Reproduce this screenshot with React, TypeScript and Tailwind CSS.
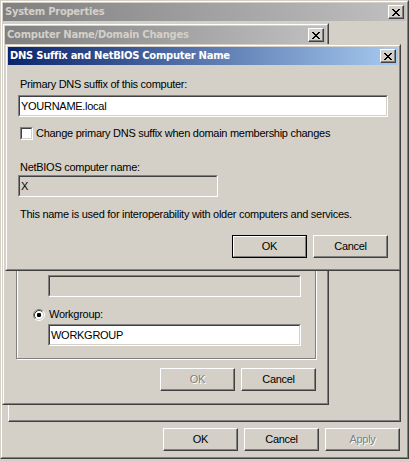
import type { ReactNode } from "react";

// classic 8x7 close glyph
const CloseGlyph = () => (
  <svg width="8" height="7" viewBox="0 0 8 7" shapeRendering="crispEdges">
    <path
      d="M0 0h2v1H0zM6 0h2v1H6zM1 1h2v1H1zM5 1h2v1H5zM2 2h4v1H2zM3 3h2v1H3zM2 4h4v1H2zM1 5h2v1H1zM5 5h2v1H5zM0 6h2v1H0zM6 6h2v1H6z"
      fill="#000"
    />
  </svg>
);

const TitleBar = ({ title, active }: { title: string; active?: boolean }) => (
  <div
    className={
      active
        ? "flex h-[18px] shrink-0 items-center bg-[linear-gradient(to_right,#0a246a,#a6caf0)] px-[2px] text-white"
        : "flex h-[18px] shrink-0 items-center bg-[linear-gradient(to_right,#808080,#c0c0c0)] px-[2px] text-[#d4d0c8]"
    }
  >
    <span className="font-['DejaVu_Sans',sans-serif] text-[10px] font-bold leading-none whitespace-nowrap">{title}</span>
    <div className="ml-auto flex h-[14px] w-[16px] items-center justify-center border border-t-white border-l-white border-r-[#404040] border-b-[#404040] bg-[#d4d0c8] pt-px shadow-[inset_-1px_-1px_0_#808080]">
      <CloseGlyph />
    </div>
  </div>
);

const Win = ({ pos, title, active, children }: { pos: string; title: string; active?: boolean; children: ReactNode }) => (
  <div className={`absolute ${pos} flex flex-col border border-t-[#d4d0c8] border-l-[#d4d0c8] border-r-[#404040] border-b-[#404040] bg-[#d4d0c8]`}>
    <div className="flex min-h-0 flex-1 flex-col border border-t-white border-l-white border-r-[#808080] border-b-[#808080] p-px">
      <TitleBar title={title} active={active} />
      <div className="flex min-h-0 flex-1 flex-col">{children}</div>
    </div>
  </div>
);

const Field = ({ size, disabled, children }: { size: string; disabled?: boolean; children?: ReactNode }) => (
  <div className={`${size} shrink-0 border border-t-[#808080] border-l-[#808080] border-r-white border-b-white`}>
    <div
      className={
        disabled
          ? "flex h-full items-center border border-t-[#404040] border-l-[#404040] border-r-[#d4d0c8] border-b-[#d4d0c8] bg-[#d4d0c8] px-px"
          : "flex h-full items-center border border-t-[#404040] border-l-[#404040] border-r-[#d4d0c8] border-b-[#d4d0c8] bg-white px-px"
      }
    >
      {children}
    </div>
  </div>
);

const Btn = ({ label, def, disabled }: { label: string; def?: boolean; disabled?: boolean }) => {
  if (def) {
    return (
      <div className="h-[23px] w-[75px] border border-black">
        <div className="flex h-full items-center justify-center border border-t-white border-l-white border-r-[#808080] border-b-[#808080]">
          {label}
        </div>
      </div>
    );
  }
  return (
    <div className="flex h-[23px] w-[75px] items-center justify-center border border-t-white border-l-white border-r-[#404040] border-b-[#404040] shadow-[inset_-1px_-1px_0_#808080]">
      <span className={disabled ? "text-[#808080] [text-shadow:1px_1px_0_#fff]" : ""}>{label}</span>
    </div>
  );
};

const Check = () => (
  <div className="h-[13px] w-[13px] shrink-0 border border-t-[#808080] border-l-[#808080] border-r-white border-b-white">
    <div className="h-full border border-t-[#404040] border-l-[#404040] border-r-[#d4d0c8] border-b-[#d4d0c8] bg-white" />
  </div>
);

const Radio = ({ on }: { on?: boolean }) => (
  <svg width="12" height="12" viewBox="0 0 12 12" className="shrink-0">
    <circle cx="6" cy="6" r="4.5" fill="#fff" />
    <path d="M2.11 9.89 A5.5 5.5 0 0 1 9.89 2.11" stroke="#808080" fill="none" />
    <path d="M9.89 2.11 A5.5 5.5 0 0 1 2.11 9.89" stroke="#fff" fill="none" />
    <path d="M2.82 9.18 A4.5 4.5 0 0 1 9.18 2.82" stroke="#404040" fill="none" />
    <path d="M9.18 2.82 A4.5 4.5 0 0 1 2.82 9.18" stroke="#d4d0c8" fill="none" />
    {on && <rect x="4" y="4" width="4" height="4" rx="1.2" fill="#000" />}
  </svg>
);

export default function App() {
  return (
    <div className="relative h-[462px] w-[410px] overflow-hidden bg-[#d4d0c8] font-['Liberation_Sans',Arial,sans-serif] text-[11px] leading-[13px] tracking-[-0.28px] text-black">
      {/* System Properties */}
      <Win pos="left-0 top-0 h-[459px] w-[409px]" title="System Properties">
        <div className="mx-[5px] mt-[39px] h-[362px] border border-t-white border-l-white border-r-[#404040] border-b-[#404040] shadow-[inset_-1px_-1px_0_#808080]" />
        <div className="mt-[6px] flex justify-end gap-[6px] pr-[6px]">
          <Btn label="OK" />
          <Btn label="Cancel" />
          <Btn label="Apply" disabled />
        </div>
      </Win>

      {/* Computer Name/Domain Changes - upper part sits under the DNS dialog */}
      <Win pos="left-[2px] top-[23px] h-[382px] w-[327px]" title="Computer Name/Domain Changes">
        <div className="flex flex-col pl-[11px] pr-[10px]">
          <div className="h-[192px]" />
          <div className="h-[123px] border border-[#808080] shadow-[inset_1px_1px_0_#fff,1px_1px_0_#fff]">
            <div className="flex flex-col pl-[16px] pt-[14px]">
              <div className="flex h-[13px] items-center">
                <Radio />
              </div>
              <div className="ml-[15px] mt-[11px]">
                <Field size="h-[22px] w-[253px]" disabled />
              </div>
              <div className="mt-[11px] flex h-[13px] items-center gap-[4px]">
                <Radio on />
                <span>Workgroup:</span>
              </div>
              <div className="ml-[15px] mt-[3px]">
                <Field size="h-[22px] w-[253px]">WORKGROUP</Field>
              </div>
            </div>
          </div>
          <div className="mt-[9px] flex justify-end gap-[6px]">
            <Btn label="OK" disabled />
            <Btn label="Cancel" />
          </div>
        </div>
      </Win>

      {/* DNS Suffix and NetBIOS Computer Name */}
      <Win pos="left-[5px] top-[44px] h-[227px] w-[396px]" title="DNS Suffix and NetBIOS Computer Name" active>
        <div className="flex flex-col px-[10px] pt-[13px]">
          <span className="ml-[2px]">Primary DNS suffix of this computer:</span>
          <div className="mt-[4px]">
            <Field size="h-[22px] w-full">YOURNAME.local</Field>
          </div>
          <div className="ml-[2px] mt-[10px] flex h-[13px] items-center gap-[3px]">
            <Check />
            <span>Change primary DNS suffix when domain membership changes</span>
          </div>
          <span className="ml-[2px] mt-[21px]">NetBIOS computer name:</span>
          <div className="mt-[1px]">
            <Field size="h-[22px] w-[200px]" disabled>X</Field>
          </div>
          <span className="ml-[2px] mt-[11px]">This name is used for interoperability with older computers and services.</span>
          <div className="mt-[14px] flex justify-end gap-[6px]">
            <Btn label="OK" def />
            <Btn label="Cancel" />
          </div>
        </div>
      </Win>
    </div>
  );
}
